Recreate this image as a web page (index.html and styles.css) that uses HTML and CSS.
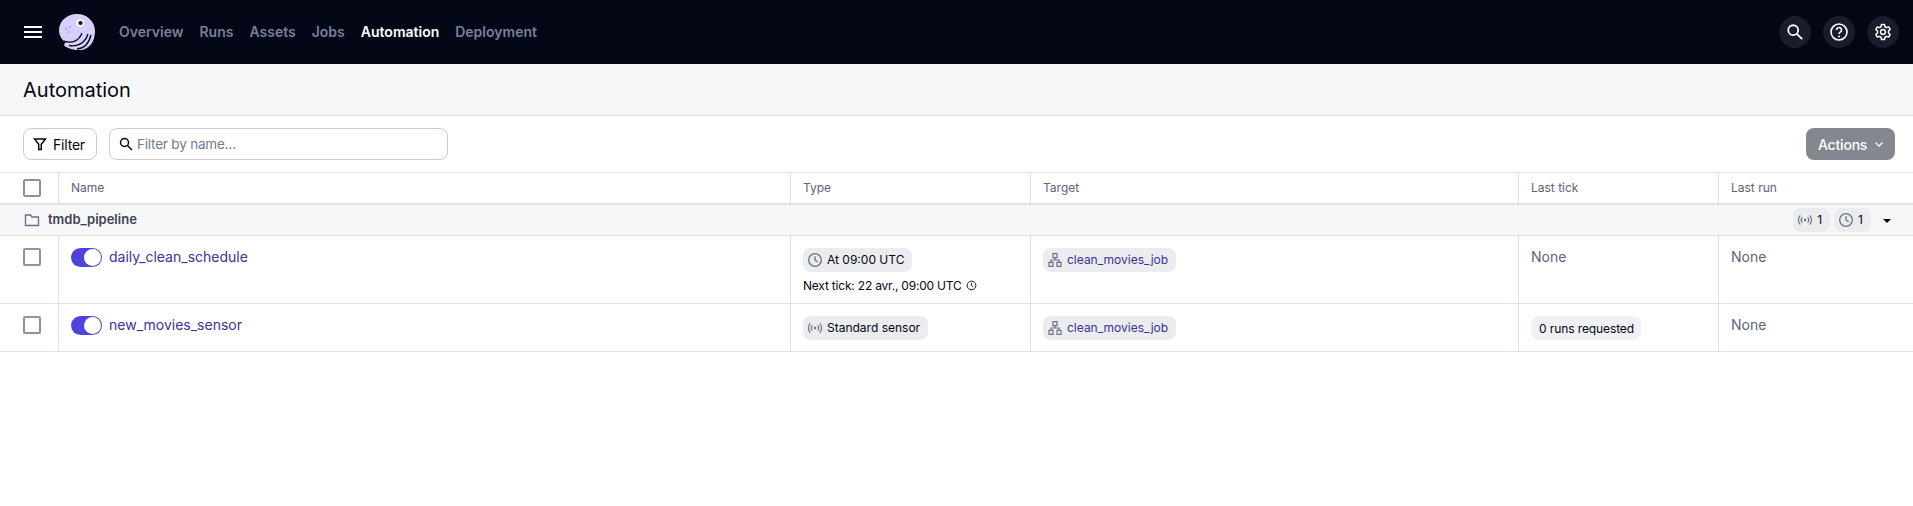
FILE: index.html
```html
<!DOCTYPE html>
<html>
<head>
  <meta charset="utf-8">
  <title>Automation</title>
  <link rel="stylesheet" href="styles.css">
</head>
<body>
  <svg width="0" height="0" class="defs">
    <symbol id="i-clock" viewBox="0 0 24 24"><circle cx="12" cy="12" r="9.5" fill="none" stroke="currentColor" stroke-width="2"/><path d="M12 6.5V12l4 3" fill="none" stroke="currentColor" stroke-width="2"/></symbol>
    <symbol id="i-sensor" viewBox="0 0 24 24"><circle cx="12" cy="12" r="2" fill="currentColor"/><path d="M8 8a6 6 0 0 0 0 8M16 8a6 6 0 0 1 0 8M5 5a10 10 0 0 0 0 14M19 5a10 10 0 0 1 0 14" fill="none" stroke="currentColor" stroke-width="1.8"/></symbol>
    <symbol id="i-job" viewBox="0 0 24 24"><path d="M9 2.5h6v6H9zM3 15.5h6v6H3zM15 15.5h6v6h-6zM12 8.500v3.500M6 15.500V12h12v3.500" fill="none" stroke="currentColor" stroke-width="1.800"/></symbol>
  </svg>

  <header class="topbar">
    <div class="menu-btn"><span></span><span></span><span></span></div>
    <svg class="logo" width="36" height="36" viewBox="0 0 36 36">
      <path d="M18 0c10 0 18 7.500 18 17 0 9-4 16-11 18.500-5 1.500-12 .5-18-2.500-3-1.500-2-3.500 0-4.500-4-2.500-7-7-7-12C0 7 8 0 18 0z" fill="#d6d0fb"/>
      <circle cx="21" cy="9" r="3.800" fill="#fff"/>
      <circle cx="21.500" cy="9" r="2.100" fill="#0b0b24"/>
      <circle cx="7" cy="15" r="1.200" fill="#b3aaf2"/><circle cx="11" cy="13" r="1.200" fill="#b3aaf2"/><circle cx="10" cy="18" r="1.200" fill="#b3aaf2"/>
      <path d="M5 27c8 3 15 0 18-8M10 31.500c8 1.500 16-2 19-11.500M18 35c7-.5 12-6 14-14" fill="none" stroke="#030615" stroke-width="1.300"/>
    </svg>
    <nav class="main-nav">
      <a>Overview</a>
      <a>Runs</a>
      <a>Assets</a>
      <a>Jobs</a>
      <a class="active">Automation</a>
      <a>Deployment</a>
    </nav>
    <div class="top-icons">
      <div class="round-btn"><svg width="18" height="18" viewBox="0 0 20 20"><circle cx="8" cy="8" r="5.500" fill="none" stroke="#fff" stroke-width="2"/><path d="M12 12l6 6" stroke="#fff" stroke-width="2"/></svg></div>
      <div class="round-btn"><svg width="20" height="20" viewBox="0 0 20 20"><circle cx="10" cy="10" r="8" fill="none" stroke="#fff" stroke-width="1.600"/><path d="M7.500 8a2.500 2.500 0 1 1 3.800 2.100c-.9.600-1.300 1-1.300 2" fill="none" stroke="#fff" stroke-width="1.600"/><circle cx="10" cy="14.500" r="1" fill="#fff"/></svg></div>
      <div class="round-btn"><svg width="18" height="18" viewBox="0 0 24 24"><path d="M10 2h4l.6 3 2.100 1.200 2.900-1 2 3.500-2.300 2v2.600l2.300 2-2 3.500-2.900-1-2.100 1.200-.6 3h-4l-.6-3-2.100-1.200-2.900 1-2-3.500 2.300-2v-2.600l-2.300-2 2-3.500 2.900 1L9.400 5z" fill="none" stroke="#fff" stroke-width="2" stroke-linejoin="round"/><circle cx="12" cy="12" r="3.200" fill="none" stroke="#fff" stroke-width="2"/></svg></div>
    </div>
  </header>

  <div class="page-title"><h1>Automation</h1></div>

  <div class="toolbar">
    <button class="btn"><svg width="14" height="14" viewBox="0 0 14 14"><path d="M1.500 2h11L8.300 7.200V12.500H5.700V7.200z" fill="none" stroke="#030615" stroke-width="1.500"/></svg>Filter</button>
    <div class="search">
      <svg width="14" height="14" viewBox="0 0 14 14"><circle cx="5.500" cy="5.500" r="4" fill="none" stroke="#030615" stroke-width="1.500"/><path d="M8.500 8.500l4.500 4.500" stroke="#030615" stroke-width="1.500"/></svg>
      <span>Filter by name…</span>
    </div>
    <button class="actions">Actions <svg width="10" height="10" viewBox="0 0 10 10"><path d="M1.500 3.500L5 7l3.500-3.500" fill="none" stroke="#fff" stroke-width="1.300"/></svg></button>
  </div>

  <div class="row head-row">
    <div class="cell check-cell"><i class="check"></i></div>
    <div class="cell">Name</div>
    <div class="cell">Type</div>
    <div class="cell">Target</div>
    <div class="cell">Last tick</div>
    <div class="cell">Last run</div>
  </div>

  <div class="group-row">
    <svg class="folder" width="16" height="14" viewBox="0 0 16 14"><path d="M1.500 12.500V2h5l1.500 2h6.500v8.500z" fill="none" stroke="#6b7280" stroke-width="1.400"/></svg>
    <b>tmdb_pipeline</b>
    <div class="group-tags">
      <span class="tag"><svg width="16" height="16" class="tag-icon"><use href="#i-sensor"/></svg>1</span>
      <span class="tag"><svg width="16" height="16" class="tag-icon"><use href="#i-clock"/></svg>1</span>
      <span class="caret"></span>
    </div>
  </div>

  <div class="row item-row tall">
    <div class="cell check-cell"><i class="check"></i></div>
    <div class="cell name-cell"><span class="toggle"></span><a>daily_clean_schedule</a></div>
    <div class="cell type-cell">
      <span class="tag"><svg width="16" height="16" class="tag-icon"><use href="#i-clock"/></svg>At 09:00 UTC</span>
      <div class="next-tick">Next tick: 22 avr., 09:00 UTC <svg width="11" height="11"><use href="#i-clock"/></svg></div>
    </div>
    <div class="cell"><span class="tag link"><svg width="16" height="16" class="tag-icon"><use href="#i-job"/></svg>clean_movies_job</span></div>
    <div class="cell plain">None</div>
    <div class="cell plain">None</div>
  </div>

  <div class="row item-row">
    <div class="cell check-cell"><i class="check"></i></div>
    <div class="cell name-cell"><span class="toggle"></span><a>new_movies_sensor</a></div>
    <div class="cell type-cell"><span class="tag"><svg width="16" height="16" class="tag-icon"><use href="#i-sensor"/></svg>Standard sensor</span></div>
    <div class="cell"><span class="tag link"><svg width="16" height="16" class="tag-icon"><use href="#i-job"/></svg>clean_movies_job</span></div>
    <div class="cell"><span class="tag light">0 runs requested</span></div>
    <div class="cell plain">None</div>
  </div>
</body>
</html>
```

FILE: styles.css
```css
* {
	box-sizing: border-box;
}

body {
	margin: 0;
	background: #fff;
	color: #030615;
	font-family: Inter, "Noto Sans", sans-serif;
	font-size: 12px;
}

.defs {
	display: none;
}

/* top bar */
.topbar {
	display: flex;
	align-items: center;
	height: 64px;
	padding: 0 14px 0 24px;
	background: #030615;
}

.menu-btn {
	display: flex;
	flex-direction: column;
	gap: 3px;
	width: 18px;
	margin-right: 17px;
}

.menu-btn span {
	height: 2px;
	background: #fff;
}

.main-nav {
	display: flex;
	gap: 16px;
	margin-left: 24px;
	padding-bottom: 2px;
	font-size: 14px;
	font-weight: 600;
	color: #75819b;
}

.main-nav .active {
	color: #fff;
}

.top-icons {
	display: flex;
	gap: 12px;
	margin-left: auto;
}

.round-btn {
	display: flex;
	align-items: center;
	justify-content: center;
	width: 32px;
	height: 32px;
	border-radius: 50%;
	background: #191d2b;
}

/* title */
.page-title {
	height: 52px;
	padding: 0 23px;
	display: flex;
	align-items: center;
	background: #f6f7f9;
	border-bottom: 1px solid #d9dbe2;
}

.page-title h1 {
	margin: 0;
	font-size: 20px;
	font-weight: 400;
}

/* toolbar */
.toolbar {
	display: flex;
	align-items: center;
	height: 56px;
	padding: 0 18px 0 23px;
}

.btn {
	display: flex;
	align-items: center;
	gap: 6px;
	width: 74px;
	height: 32px;
	padding: 0 9px;
	background: #fff;
	border: 1px solid #c9ccd8;
	border-radius: 8px;
	color: #030615;
	font: inherit;
	font-size: 14px;
	letter-spacing: -0.2px;
}

.search {
	display: flex;
	align-items: center;
	gap: 4px;
	width: 339px;
	height: 32px;
	margin-left: 12px;
	padding: 0 9px;
	border: 1px solid #c9ccd8;
	border-radius: 8px;
	font-size: 13.5px;
	letter-spacing: -0.2px;
	color: #6f7a93;
}

.actions {
	display: flex;
	align-items: center;
	justify-content: space-between;
	width: 89px;
	height: 32px;
	margin-left: auto;
	padding: 0 11px 0 12px;
	border: 0;
	border-radius: 8px;
	background: #85878f;
	color: #fff;
	font: inherit;
	font-size: 14px;
	font-weight: 500;
	letter-spacing: -0.2px;
}

/* table */
.row {
	display: grid;
	grid-template-columns: 58px 732px 240px 488px 200px 1fr;
	border-bottom: 1px solid #dfe1e8;
}

.cell {
	padding: 0 12px;
	border-left: 1px solid #dfe1e8;
}

.check-cell {
	border-left: 0;
	padding: 0 0 0 23px;
}

.check {
	display: block;
	width: 18px;
	height: 18px;
	border: 2px solid #8a93a6;
	border-radius: 2px;
}

.head-row {
	height: 33px;
	border-top: 1px solid #dfe1e8;
	border-bottom: 2px solid #dfe1e8;
	color: #5c6478;
}

.head-row .cell {
	display: flex;
	align-items: center;
}

.head-row .cell:not(.check-cell) {
	padding-bottom: 2px;
}

.group-row {
	display: flex;
	align-items: center;
	height: 31px;
	padding: 0 22px 0 24px;
	background: #f6f7f9;
	border-bottom: 1px solid #dfe1e8;
	color: #3d4354;
	font-size: 13px;
}

.group-row b {
	margin-left: 8px;
	margin-top: -2px;
	font-weight: 600;
}

.group-tags {
	display: flex;
	align-items: center;
	gap: 4px;
	margin-left: auto;
}

.caret {
	width: 0;
	height: 0;
	margin: 2px 0 0 8px;
	border: 4px solid transparent;
	border-top: 4px solid #030615;
	border-bottom: 0;
}

.item-row {
	height: 48px;
	font-size: 14px;
}

.item-row.tall {
	height: 68px;
}

.item-row .cell {
	padding-top: 13px;
}

.item-row .check-cell,
.item-row .plain,
.item-row .name-cell {
	padding-top: 12px;
}

.item-row .plain {
	color: #5c6478;
}

.name-cell {
	display: flex;
	align-items: flex-start;
	gap: 7px;
}

.name-cell a {
	color: #3a3296;
}

.toggle {
	position: relative;
	display: block;
	width: 31px;
	height: 19px;
	border-radius: 10px;
	background: #4f43dd;
}

.toggle::after {
	content: "";
	position: absolute;
	top: 1px;
	right: 1px;
	width: 17px;
	height: 17px;
	border-radius: 50%;
	background: #fff;
}

.tag {
	display: inline-flex;
	align-items: center;
	gap: 4px;
	height: 24px;
	padding: 0 8px 1px 4px;
	border-radius: 8px;
	background: #ebecf0;
	color: #030615;
	font-size: 12px;
}

.tag-icon {
	color: #6b7280;
}

.tag.link {
	color: #3a3296;
}

.tag.light {
	padding: 0 7px 0 8px;
	background: #f0f1f4;
	letter-spacing: -0.1px;
}

.type-cell .tag,
.item-row .cell .tag {
	margin-top: -1px;
}

.next-tick {
	display: flex;
	align-items: center;
	gap: 4px;
	margin-top: 6px;
	font-size: 12px;
	letter-spacing: -0.2px;
}
```
